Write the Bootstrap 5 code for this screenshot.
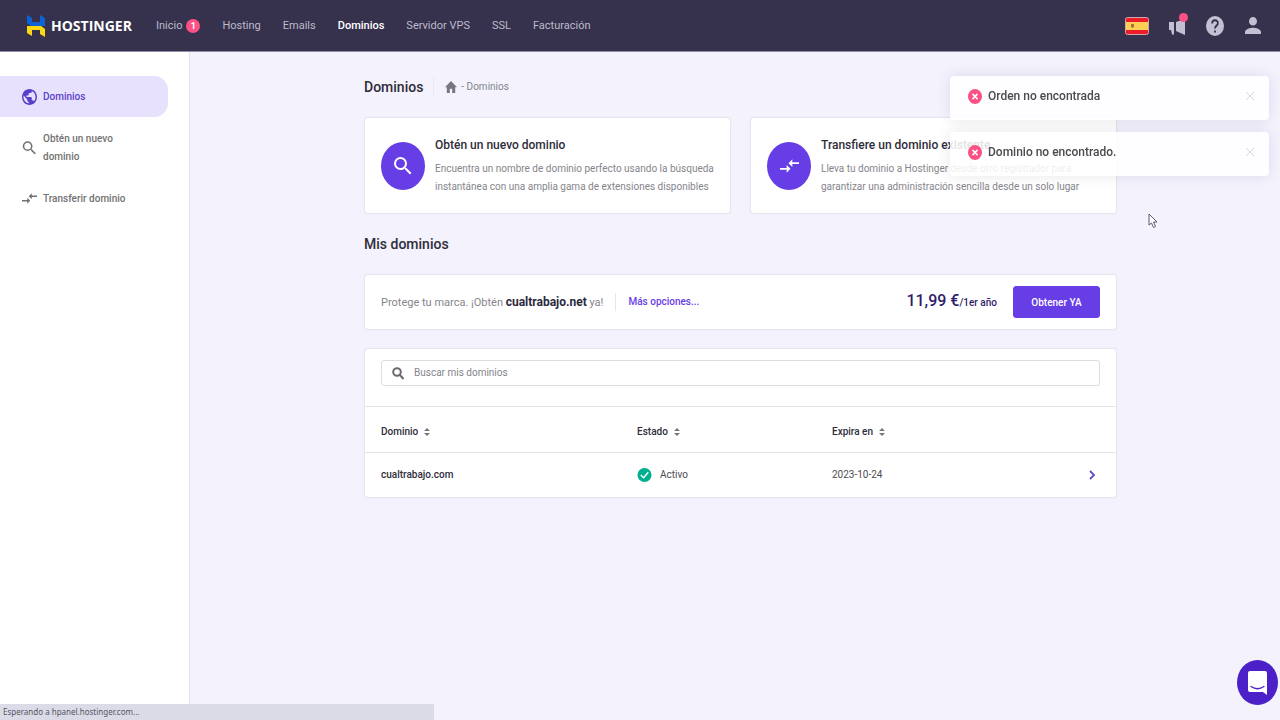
<!DOCTYPE html>
<html lang="es">
<head>
<meta charset="utf-8">
<meta name="viewport" content="width=device-width, initial-scale=1">
<title>Dominios - Hostinger</title>
<link href="https://cdn.jsdelivr.net/npm/bootstrap@5.3.0/dist/css/bootstrap.min.css" rel="stylesheet">
<style>
:root { --brand: #673de6; --ink: #2f2d3a; --muted: #85858b; --line: #e6e6ee; }
body { font-family: Roboto, "Liberation Sans", sans-serif; font-size: 10px; line-height: 18px; color: var(--ink); background: #f3f2fd; }
a { text-decoration: none; }
svg { display: block; flex-shrink: 0; }
.topbar { height: 51px; padding: 0 17px 0 26px; background: #36324d; box-shadow: 0 1px #8f8ca3; z-index: 5; }
.brand-name { font-family: "Open Sans", sans-serif; font-size: 14px; font-weight: 700; color: #fff; margin-left: 5px; width: 105px; }
.topnav { gap: 22px; }
.topnav .nav-link { padding: 0; font-size: 11px; color: #bdbbcb; }
.topnav .nav-link.active { color: #fff; font-weight: 500; }
.count-pill { width: 14px; height: 14px; font-size: 9px; line-height: 14px; padding: 0; background: #fc5185; margin-left: 4px; }
.tools { gap: 18px; }
.tools button, .plain { border: 0; background: none; padding: 0; color: inherit; }
.tools button { width: 20px; color: #c3c0d3; display: flex; justify-content: center; }
.tools .lang { width: 24px; }
.news-dot { top: -3px; right: -1px; width: 9px; height: 9px; background: #fc5185; }
.sidebar { width: 190px; flex-shrink: 0; background: #fff; border-right: 1px solid #e3e2ee; padding-top: 25px; }
.sidebar .nav-link { display: flex; align-items: center; gap: 6px; min-height: 41px; width: 168px; padding: 0 30px 0 22px; font-weight: 500; color: #727272; }
.sidebar .nav-link.active { color: #5a3fc8; background: #e8e1fd; border-radius: 0 14px 14px 0; }
.sidebar .nav { gap: 10px; }
.content { padding: 26px 16px 24px 27px; }
.inner { max-width: 753px; margin: 0 auto; }
h1, h2 { font-size: 14px; line-height: 20px; font-weight: 500; margin: 0; }
.crumbs { color: var(--muted); border-left: 1px solid #e9e7f5; margin-left: 10px; padding-left: 11px; gap: 4px; }
.crumbs a { color: #77757f; }
.panel { --bs-card-border-color: var(--line); --bs-card-border-radius: 4px; --bs-card-inner-border-radius: 3px; color: inherit; box-shadow: 0 0 2px #e9e8f2; }
.action { padding: 16px; min-height: 97px; gap: 10px; }
.round { width: 44px; height: 48px; border-radius: 50%; background: var(--brand); color: #fff; flex-shrink: 0; }
.action h3 { font-size: 12px; line-height: 18px; font-weight: 500; margin: 0 0 6px; }
.action p { margin: 0; color: var(--muted); }
.offer { min-height: 56px; padding: 11px 16px; }
.offer-text { font-size: 11px; color: var(--muted); }
.offer-text strong { font-size: 12px; font-weight: 700; color: #2b2940; }
.more { border-left: 1px solid var(--line); margin-left: 12px; padding-left: 12px; font-weight: 500; color: var(--brand); }
.price { font-size: 16px; font-weight: 500; color: #2f1c6a; }
.price small { font-size: 10px; }
.buy { --bs-btn-bg: #673de6; --bs-btn-border-color: #673de6; --bs-btn-color: #fff; --bs-btn-hover-bg: #5025d1; --bs-btn-hover-color: #fff; --bs-btn-font-size: 10px; --bs-btn-font-weight: 500; --bs-btn-border-radius: 3px; --bs-btn-padding-y: 0; --bs-btn-padding-x: 0; width: 87px; height: 32px; margin-left: 16px; }
.listing { margin-top: 18px; }
.search-row { padding: 11px 16px 20px; }
.searchbox { height: 26px; border: 1px solid #dcdce2; border-radius: 3px; padding: 0 10px; gap: 10px; color: #6b6b6b; }
.searchbox .form-control { border: 0; padding: 0; font-size: 10px; line-height: 18px; min-height: 0; background: none; box-shadow: none; }
.searchbox .form-control::placeholder { color: #85858b; }
.domains { --bs-table-bg: transparent; font-size: 10px; color: inherit; border-color: #e4e4ea; margin: 0; table-layout: fixed; }
.domains th, .domains td { border-top: 1px solid #e2e2e8; border-bottom: 0; padding: 0 16px 0 0; vertical-align: middle; }
.domains th { font-weight: 500; height: 46px; padding-top: 5px; }
.domains td { height: 44px; color: #4d4d54; }
.domains tr > :first-child { padding-left: 16px; width: 272px; font-weight: 500; color: var(--ink); }
.domains tr > :nth-child(2) { width: 195px; }
.domains button { font-weight: 500; display: flex; align-items: center; gap: 6px; }
.toasts { top: 76px; right: 11px; gap: 12px; z-index: 10; }
.toasts .toast { --bs-toast-max-width: 319px; --bs-toast-bg: rgba(255,255,255,.86); --bs-toast-border-width: 0; --bs-toast-border-radius: 4px; --bs-toast-box-shadow: 0 0 14px rgba(60,50,90,.12); width: 319px; height: 44px; margin: 0; padding: 0 13px 4px 18px; font-size: 12px; font-weight: 500; color: #4a4a50; gap: 6px; }
.toast .plain { color: #d5d5da; margin-left: auto; }
.status { position: fixed; left: 0; bottom: 0; width: 434px; height: 16px; line-height: 16px; padding-left: 3px; background: #dadbe6; color: #55555f; font-family: "Noto Sans", sans-serif; font-size: 8px; z-index: 10; }
.chat { position: fixed; right: 2px; bottom: 15px; width: 41px; height: 45px; border: 0; border-radius: 50%; background: #4b20c9; padding: 0; display: flex; align-items: center; justify-content: center; }
.pointer { position: fixed; left: 1148px; top: 213px; z-index: 20; }
</style>
</head>
<body class="min-vh-100 d-flex flex-column">
<header class="topbar d-flex align-items-center">
  <a class="d-flex align-items-center" href="#" aria-label="Hostinger">
    <svg width="20" height="22" viewBox="0 0 20 22"><path d="M1 0l5 3v4h8V0l5 3v8H5l-4-3z" fill="#0d63d6"/><path d="M1 11h14l4 3v8l-5-3v-4H6v6l-5-3z" fill="#fbd80f"/></svg>
    <span class="brand-name">HOSTINGER</span>
  </a>
  <nav class="topnav nav flex-nowrap">
    <a class="nav-link d-flex align-items-center" href="#">Inicio <span class="badge rounded-circle count-pill">1</span></a>
    <a class="nav-link" href="#">Hosting</a>
    <a class="nav-link" href="#">Emails</a>
    <a class="nav-link active" href="#" aria-current="page">Dominios</a>
    <a class="nav-link" href="#">Servidor VPS</a>
    <a class="nav-link" href="#">SSL</a>
    <a class="nav-link" href="#">Facturación</a>
  </nav>
  <div class="tools d-flex align-items-center ms-auto">
    <button class="lang" type="button" aria-label="Idioma: español"><svg width="24" height="18" viewBox="0 0 24 18"><rect x=".5" y=".5" width="23" height="17" rx="2" fill="#ed1c2b" stroke="#d3a4a9"/><path d="M1 5h22v8H1z" fill="#ffd056"/><path d="M6 7h3v3l-1.500 1L6 10z" fill="#a8752c"/></svg></button>
    <button class="position-relative" type="button" aria-label="Novedades"><svg width="18" height="20" viewBox="0 0 18 20" fill="currentColor"><path d="M8 6l9-3v16l-9-4zM1 6h5v12.500H4L3 14H1z"/></svg><span class="news-dot position-absolute rounded-circle"></span></button>
    <button type="button" aria-label="Ayuda"><svg width="18" height="20" viewBox="0 0 20 20" preserveAspectRatio="none"><circle cx="10" cy="10" r="10" fill="currentColor"/><path d="M6.800 7.500C6.800 3 13.200 3.200 13.200 7.200c0 2.400-3.200 2.500-3.200 5.300" fill="none" stroke="#36324d" stroke-width="2"/><path d="M9 14.500h2v2H9z" fill="#36324d"/></svg></button>
    <button type="button" aria-label="Cuenta"><svg width="16" height="17" viewBox="4 4 16 16" preserveAspectRatio="none" fill="currentColor"><path d="M12 12a4 4 0 100-8 4 4 0 000 8zm0 2c-2.670 0-8 1.340-8 4v2h16v-2c0-2.660-5.330-4-8-4z"/></svg></button>
  </div>
</header>

<div class="d-flex flex-grow-1">
  <aside class="sidebar">
    <nav class="nav flex-column">
      <a class="nav-link active" href="#"><svg width="15" height="16" viewBox="2 2 20 20" preserveAspectRatio="none" fill="currentColor"><path d="M12 2C6.480 2 2 6.480 2 12s4.480 10 10 10 10-4.480 10-10S17.520 2 12 2zm-1 17.930c-3.950-.49-7-3.850-7-7.930 0-.62.080-1.210.21-1.790L9 15v1c0 1.100.9 2 2 2v1.930zm6.900-2.540c-.26-.81-1-1.390-1.900-1.390h-1v-3c0-.55-.45-1-1-1H8v-2h2c.55 0 1-.45 1-1V7h2c1.100 0 2-.9 2-2v-.41c2.930 1.190 5 4.060 5 7.410 0 2.080-.8 3.970-2.100 5.390z"/></svg><span>Dominios</span></a>
      <a class="nav-link" href="#"><svg width="15" height="16" viewBox="2 2 20 20" fill="currentColor"><use href="#lens"/></svg><span>Obtén un nuevo dominio</span></a>
      <a class="nav-link" href="#"><svg width="15" height="15" viewBox="2 2 20 20" fill="currentColor"><use href="#swap"/></svg><span class="text-nowrap">Transferir dominio</span></a>
    </nav>
  </aside>

  <main class="content flex-grow-1">
    <div class="inner">
      <div class="d-flex align-items-center">
        <h1>Dominios</h1>
        <nav class="crumbs d-flex align-items-center" aria-label="Ruta">
          <a href="#" aria-label="Inicio"><svg width="12" height="12" viewBox="2 3 20 17" preserveAspectRatio="none" fill="currentColor"><path d="M10 20v-6h4v6h5v-8h3L12 3 2 12h3v8z"/></svg></a>
          <span>- Dominios</span>
        </nav>
      </div>

      <div class="row mt-3 pt-1" style="--bs-gutter-x: 19px">
        <div class="col-6"><div class="card panel action flex-row align-items-center">
          <span class="round d-flex align-items-center justify-content-center"><svg width="20" height="22" viewBox="2 2 20 20" fill="currentColor"><use href="#lens"/></svg></span>
          <div><h3>Obtén un nuevo dominio</h3><p>Encuentra un nombre de dominio perfecto usando la búsqueda instantánea con una amplia gama de extensiones disponibles</p></div>
        </div></div>
        <div class="col-6"><div class="card panel action flex-row align-items-center">
          <span class="round d-flex align-items-center justify-content-center"><svg width="19" height="22" viewBox="2 2 20 20" fill="currentColor"><use href="#swap"/></svg></span>
          <div><h3>Transfiere un dominio existente</h3><p>Lleva tu dominio a Hostinger desde otro registrador para garantizar una administración sencilla desde un solo lugar</p></div>
        </div></div>
      </div>

      <h2 class="my-3 py-1">Mis dominios</h2>

      <section class="card panel offer flex-row align-items-center">
        <span class="offer-text">Protege tu marca. ¡Obtén <strong>cualtrabajo.net</strong> ya!</span>
        <a class="more" href="#">Más opciones...</a>
        <span class="price ms-auto">11,99 €<small>/1er año</small></span>
        <button class="btn buy" type="button">Obtener YA</button>
      </section>

      <section class="card panel listing">
        <div class="search-row">
          <label class="searchbox d-flex align-items-center" for="domain-search">
            <svg width="12" height="13" viewBox="0 0 12 13" fill="none" stroke="currentColor" stroke-width="2"><circle cx="5" cy="5" r="3.800"/><path d="M8 8l3.500 4"/></svg>
            <input class="form-control" id="domain-search" type="text" placeholder="Buscar mis dominios" aria-label="Buscar mis dominios">
          </label>
        </div>
        <table class="table domains">
          <thead><tr>
            <th scope="col"><button class="plain" type="button">Dominio <svg width="6" height="8"><use href="#sort"/></svg></button></th>
            <th scope="col"><button class="plain" type="button">Estado <svg width="6" height="8"><use href="#sort"/></svg></button></th>
            <th scope="col"><button class="plain" type="button">Expira en <svg width="6" height="8"><use href="#sort"/></svg></button></th>
          </tr></thead>
          <tbody><tr>
            <td>cualtrabajo.com</td>
            <td><div class="d-flex align-items-center gap-2"><svg width="15" height="16" viewBox="0 0 16 16"><circle cx="8" cy="8" r="7.500" fill="#00b090"/><path d="M4 8l3 3 5-6" fill="none" stroke="#fff" stroke-width="1.500"/></svg>Activo</div></td>
            <td><div class="d-flex align-items-center justify-content-between">2023-10-24 <a class="px-1" href="#" aria-label="Ver cualtrabajo.com"><svg width="7" height="10" viewBox="0 0 7 10" fill="none" stroke="#5f4cc4" stroke-width="1.800"><path d="M1 1l4 4-4 4"/></svg></a></div></td>
          </tr></tbody>
        </table>
      </section>
    </div>
  </main>
</div>

<div class="toasts position-fixed d-flex flex-column">
  <div class="toast show d-flex align-items-center" role="alert"><svg width="14" height="15" viewBox="0 0 14 14" preserveAspectRatio="none"><use href="#fail"/></svg>Orden no encontrada<button class="plain" type="button" aria-label="Cerrar"><svg width="12" height="12"><use href="#cross"/></svg></button></div>
  <div class="toast show d-flex align-items-center" role="alert"><svg width="14" height="15" viewBox="0 0 14 14" preserveAspectRatio="none"><use href="#fail"/></svg>Dominio no encontrado.<button class="plain" type="button" aria-label="Cerrar"><svg width="12" height="12"><use href="#cross"/></svg></button></div>
</div>

<div class="status" role="status">Esperando a hpanel.hostinger.com...</div>
<button class="chat" type="button" aria-label="Abrir chat"><svg width="20" height="24" viewBox="0 0 20 24"><path d="M2 0h15q2 0 2 2v22l-4-3H2q-2 0-2-2V2q0-2 2-2z" fill="#fff"/><path d="M3 15.500q6.500 4.500 13 0" fill="none" stroke="#4b20c9" stroke-width="1.300" stroke-linecap="round"/></svg></button>
<svg class="pointer" width="10" height="16" viewBox="0 0 10 16"><path d="M1 1v11l2.500-2 2 4.500 2-1L5.500 9H9z" fill="#fff" stroke="#5b5a72"/></svg>

<svg class="position-absolute" width="0" height="0" aria-hidden="true"><defs>
  <path id="lens" d="M15.500 14h-.79l-.28-.27A6.470 6.470 0 0016 9.500 6.500 6.500 0 109.500 16c1.610 0 3.090-.59 4.230-1.570l.27.28v.79l5 4.990L20.490 19l-4.990-5zm-6 0C7.010 14 5 11.990 5 9.500S7.010 5 9.500 5 14 7.010 14 9.500 11.990 14 9.500 14z"/>
  <path id="swap" d="M9.010 14H2v2h7.010v3L13 15l-3.990-4v3zm5.980-1v-3H22V8h-7.010V5L11 9l3.990 4z"/>
  <path id="sort" d="M0 3l3-3 3 3zM0 5h6L3 8z" fill="#77777c"/>
  <g id="fail"><circle cx="7" cy="7" r="7" fill="#fc5185"/><path d="M4.500 4.500l5 5m0-5l-5 5" stroke="#fff" stroke-width="1.500"/></g>
  <path id="cross" d="M2 2l8 8m0-8l-8 8" fill="none" stroke="currentColor"/>
</defs></svg>
<script src="https://cdn.jsdelivr.net/npm/bootstrap@5.3.0/dist/js/bootstrap.bundle.min.js"></script>
</body>
</html>
